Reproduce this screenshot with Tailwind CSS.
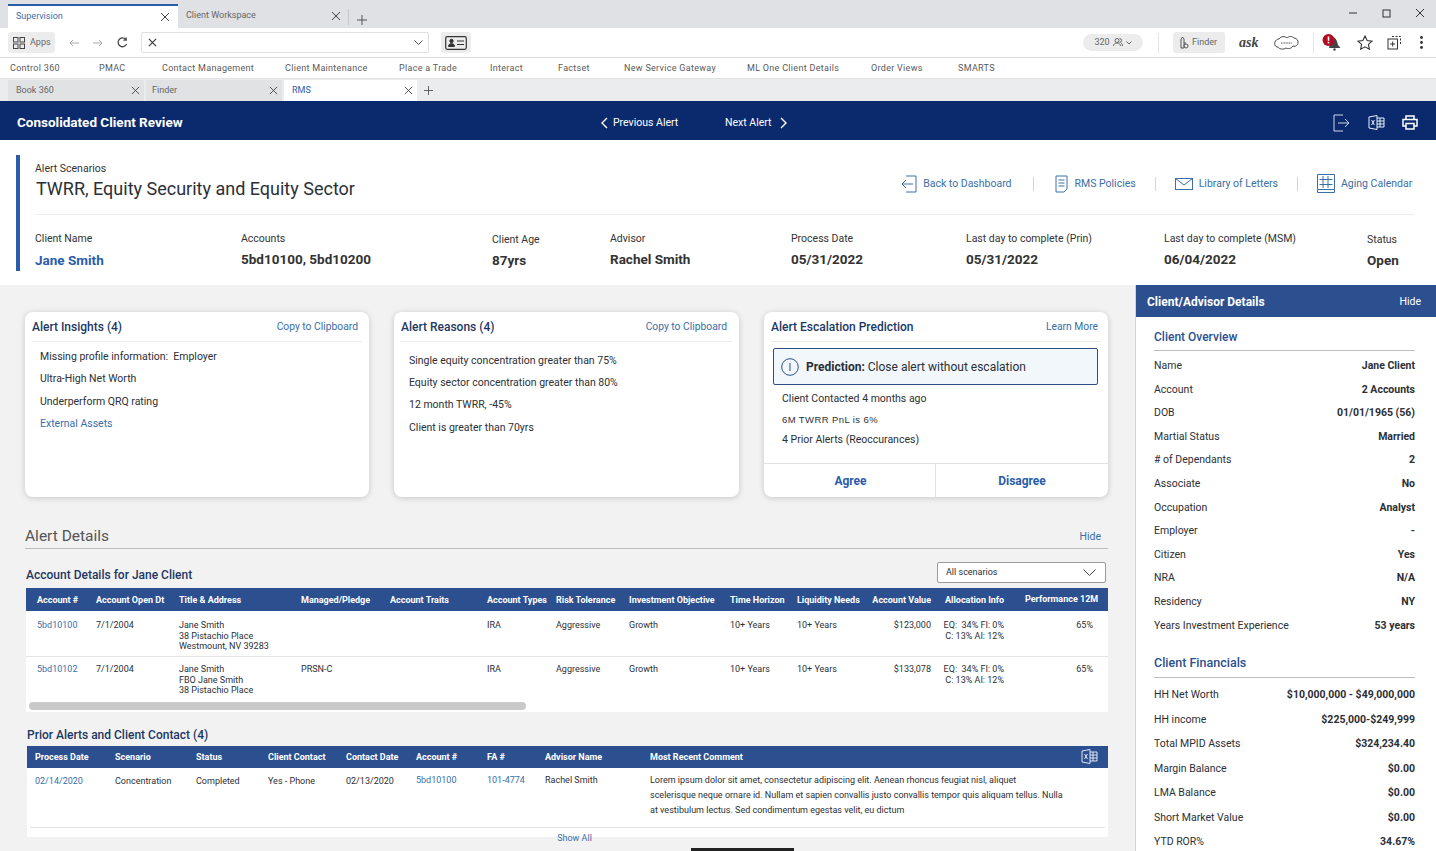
<!DOCTYPE html>
<html lang="en">
<head>
<meta charset="UTF-8">
<title>Consolidated Client Review</title>
<script src="https://cdn.jsdelivr.net/npm/@tailwindcss/browser@4"></script>
</head>
<body class="font-['Roboto',sans-serif] text-[#2b2f36] bg-[#f2f2f2]">
<div class="relative w-[1436px] h-[851px] overflow-hidden flex flex-col">

  <!-- browser tabs -->
  <div class="h-[28px] bg-[#dfe1e5] flex items-end pl-2 text-[9px] shrink-0">
    <div class="w-[170px] h-[24px] bg-white border-t-2 border-[#2a5caa] flex items-center justify-between pl-2 pr-[8px] text-[#3a6ea8]">
      <span>Supervision</span>
      <svg class="w-[10px] h-[10px]" viewBox="0 0 10 10" stroke="#444" fill="none"><path d="M1 1l8 8M9 1l-8 8"/></svg>
    </div>
    <div class="w-[170px] h-[24px] flex items-center justify-between pl-[8px] pr-[7px] text-[#666]">
      <span>Client Workspace</span>
      <svg class="w-[10px] h-[10px]" viewBox="0 0 10 10" stroke="#444" fill="none"><path d="M1 1l8 8M9 1l-8 8"/></svg>
    </div>
    <div class="w-px h-[16px] bg-[#c4c6ca] mb-[3px]"></div>
    <svg class="w-[10px] h-[10px] ml-[8px] mb-[3px]" viewBox="0 0 10 10" stroke="#555" fill="none"><path d="M5 0v10M0 5h10"/></svg>
    <div class="ml-auto flex items-center h-[28px] pr-[11px] gap-[24px] pb-[2px]">
      <svg class="w-[10px] h-[10px]" viewBox="0 0 10 10" stroke="#333" fill="none"><path d="M1 5h8"/></svg>
      <svg class="w-[9px] h-[9px]" viewBox="0 0 9 9" stroke="#333" fill="none"><rect x="1" y="1" width="7" height="7"/></svg>
      <svg class="w-[10px] h-[10px]" viewBox="0 0 10 10" stroke="#333" fill="none"><path d="M1 1l8 8M9 1l-8 8"/></svg>
    </div>
  </div>

  <!-- toolbar -->
  <div class="h-[30px] bg-white border-b border-[#dcdcdc] flex items-center pl-2 shrink-0">
    <div class="w-[47px] h-[21px] bg-[#ececec] rounded-[3px] flex items-center gap-[5px] pl-[5px] text-[9px] text-[#666] shrink-0">
      <svg class="w-[12px] h-[12px]" viewBox="0 0 12 12" stroke="#444" fill="none"><rect x=".5" y=".5" width="4.5" height="4.5"/><rect x="7" y=".5" width="4.5" height="4.5"/><rect x=".5" y="7" width="4.5" height="4.5"/><rect x="7" y="7" width="4.5" height="4.5"/></svg>
      <span>Apps</span>
    </div>
    <svg class="w-[10px] h-[8px] ml-[14px] shrink-0" viewBox="0 0 10 8" stroke="#aaa" fill="none"><path d="M10 4H1M4 1L1 4l3 3"/></svg>
    <svg class="w-[10px] h-[8px] ml-[14px] shrink-0" viewBox="0 0 10 8" stroke="#aaa" fill="none"><path d="M0 4h9M6 1l3 3-3 3"/></svg>
    <svg class="w-[11px] h-[11px] ml-[14px] shrink-0" viewBox="0 0 12 12" stroke="#444" stroke-width="1.4" fill="none"><path d="M10.5 7.5A4.8 4.8 0 1 1 9.5 2.5M10 .5v3H7"/></svg>
    <div class="w-[288px] h-[21px] ml-[13px] border border-[#e0e0e0] rounded-[2px] flex items-center justify-between pl-[6px] pr-[5px] shrink-0">
      <svg class="w-[9px] h-[9px]" viewBox="0 0 10 10" stroke="#333" stroke-width="1.2" fill="none"><path d="M1 1l8 8M9 1l-8 8"/></svg>
      <svg class="w-[9px] h-[5px]" viewBox="0 0 9 5" stroke="#555" fill="none"><path d="M.5.5l4 4 4-4"/></svg>
    </div>
    <div class="w-[30px] h-[21px] ml-[12px] bg-[#ececec] rounded-[3px] flex items-center justify-center shrink-0">
      <svg class="w-[22px] h-[14px]" viewBox="0 0 22 14" stroke="#333" fill="none"><rect x=".7" y=".7" width="20.6" height="12.6" rx="1.5" stroke-width="1.2"/><circle cx="6.5" cy="5" r="1.7" fill="#333"/><path d="M3.5 10.5c0-4 6-4 6 0z" fill="#333"/><path d="M12 5h7M12 8.500h7"/></svg>
    </div>
    <div class="ml-[612px] w-[60px] h-[17px] bg-[#ececec] rounded-full flex items-center justify-center gap-[3px] text-[9px] text-[#666] shrink-0">
      <span>320</span>
      <svg class="w-[10px] h-[9px]" viewBox="0 0 10 9" stroke="#666" fill="none"><circle cx="4" cy="2.500" r="2"/><path d="M.5 8c0-4 7-4 7 0M6.500.5a2 2 0 0 1 0 4M8 5c1 .5 1.500 1.500 1.500 3"/></svg>
      <svg class="w-[6px] h-[4px]" viewBox="0 0 6 4" stroke="#666" fill="none"><path d="M.5.5L3 3 5.500.5"/></svg>
    </div>
    <div class="w-px h-[20px] bg-[#e4e4e4] ml-[15px] shrink-0"></div>
    <div class="ml-[14px] w-[52px] h-[21px] bg-[#ececec] rounded-[3px] flex items-center gap-[3px] pl-[6px] text-[9px] text-[#666] shrink-0">
      <svg class="w-[10px] h-[13px]" viewBox="0 0 10 13" stroke="#555" fill="none"><path d="M2 12V3l1.500-2L5 3v9zM5 7h2"/><circle cx="7" cy="10" r="2"/></svg>
      <span>Finder</span>
    </div>
    <span class="ml-[14px] w-[20px] font-['Liberation_Serif',serif] italic font-bold text-[14px] text-[#444] shrink-0">ask</span>
    <svg class="ml-[15px] w-[25px] h-[16px] shrink-0" viewBox="0 0 25 16" stroke="#333" stroke-width=".9" fill="none"><path d="M5 4c2-3 6-3 8-1 2-2 5-2 7 0 3 0 4.500 3 4 5s-2 4-5 3c-2 3-5 3-7 2-3 2-7 1-8-1-3 0-4-3-3-5s2-3 4-3z"/><path d="M7 8h11" stroke-dasharray="1 .6"/></svg>
    <div class="w-px h-[20px] bg-[#e4e4e4] ml-[14px] shrink-0"></div>
    <svg class="ml-[8px] w-[19px] h-[17px] shrink-0" viewBox="0 0 19 17"><path d="M10 3c4 0 5 4 6 8l2.500 3H7z" fill="#444"/><circle cx="6.500" cy="6" r="6" fill="#b00d23"/><rect x="5.700" y="2.500" width="1.600" height="4.300" fill="#fff"/><rect x="5.700" y="7.800" width="1.600" height="1.600" fill="#fff"/><circle cx="12.500" cy="15.500" r="1.200" fill="#444"/></svg>
    <svg class="ml-[16px] w-[16px] h-[15px] shrink-0" viewBox="0 0 16 15" stroke="#333" stroke-width="1.100" fill="none"><path d="M8 1l2.100 4.500 4.900.6-3.600 3.300 1 4.800L8 11.800 3.600 14.200l1-4.800L1 6.100l4.900-.6z"/></svg>
    <svg class="ml-[14px] w-[15px] h-[15px] shrink-0" viewBox="0 0 15 15" stroke="#333" fill="none"><rect x="1" y="4" width="9.500" height="10"/><path d="M5.700 6.500v5M3.200 9h5"/><path d="M5 1.500h8.500V10" stroke-dasharray="2 1.500"/></svg>
    <svg class="ml-[18px] w-[3px] h-[13px] shrink-0" viewBox="0 0 3 13" fill="#333"><circle cx="1.500" cy="1.500" r="1.400"/><circle cx="1.500" cy="6.500" r="1.400"/><circle cx="1.500" cy="11.500" r="1.400"/></svg>
  </div>

  <!-- bookmarks -->
  <div class="h-[20px] bg-white flex items-center pl-[10px] pt-[2px] text-[9px] text-[#5a5a5a] tracking-[0.3px] shrink-0">
    <span class="w-[89px]">Control 360</span>
    <span class="w-[63px]">PMAC</span>
    <span class="w-[123px]">Contact Management</span>
    <span class="w-[114px]">Client Maintenance</span>
    <span class="w-[91px]">Place a Trade</span>
    <span class="w-[68px]">Interact</span>
    <span class="w-[66px]">Factset</span>
    <span class="w-[123px]">New Service Gateway</span>
    <span class="w-[124px]">ML One Client Details</span>
    <span class="w-[87px]">Order Views</span>
    <span>SMARTS</span>
  </div>

  <!-- sub tabs -->
  <div class="h-[23px] bg-[#eaecee] border-t border-[#e2e2e2] flex items-end pl-2 gap-[2px] text-[9px] shrink-0">
    <div class="w-[136px] h-[21px] bg-[#e0e2e4] flex items-center justify-between pl-[8px] pr-[4px] text-[#666]">
      <span>Book 360</span>
      <svg class="w-[9px] h-[9px]" viewBox="0 0 10 10" stroke="#444" fill="none"><path d="M1 1l8 8M9 1l-8 8"/></svg>
    </div>
    <div class="w-[136px] h-[21px] bg-[#e0e2e4] flex items-center justify-between pl-[6px] pr-[4px] text-[#666]">
      <span>Finder</span>
      <svg class="w-[9px] h-[9px]" viewBox="0 0 10 10" stroke="#444" fill="none"><path d="M1 1l8 8M9 1l-8 8"/></svg>
    </div>
    <div class="w-[133px] h-[21px] bg-white flex items-center justify-between pl-[8px] pr-[4px] text-[#2a5caa]">
      <span>RMS</span>
      <svg class="w-[9px] h-[9px]" viewBox="0 0 10 10" stroke="#444" fill="none"><path d="M1 1l8 8M9 1l-8 8"/></svg>
    </div>
    <svg class="w-[9px] h-[9px] ml-[5px] mb-[6px]" viewBox="0 0 10 10" stroke="#555" fill="none"><path d="M5 0v10M0 5h10"/></svg>
  </div>

  <!-- navy title bar -->
  <div class="h-[39px] bg-[#0b2a6e] text-white flex items-center pl-[17px] pt-[4px] shrink-0">
    <span class="w-[584px] text-[13.500px] font-bold">Consolidated Client Review</span>
    <svg class="w-[7px] h-[12px]" viewBox="0 0 7 12" stroke="#fff" stroke-width="1.400" fill="none"><path d="M6 1L1 6l5 5"/></svg>
    <span class="ml-[5px] w-[112px] text-[10.500px]">Previous Alert</span>
    <span class="text-[10.500px] w-[55px]">Next Alert</span>
    <svg class="w-[7px] h-[12px]" viewBox="0 0 7 12" stroke="#fff" stroke-width="1.400" fill="none"><path d="M1 1l5 5-5 5"/></svg>
    <svg class="ml-[546px] w-[17px] h-[18px]" viewBox="0 0 17 18" stroke="#c8d6ec" fill="none"><path d="M10 1H1v16h9M5 9h11M12 5l4 4-4 4"/></svg>
    <svg class="ml-[18px] w-[17px] h-[15px]" viewBox="0 0 17 15" stroke="#e8eef7" fill="none"><path d="M1 2l8-1.500v14L1 13zM9 3h7v9H9M12 3v9M9 6h7M9 9h7M3.500 5l3 5M6.500 5l-3 5"/></svg>
    <svg class="ml-[17px] w-[16px] h-[15px]" viewBox="0 0 16 15" stroke="#fff" stroke-width="1.500" fill="none"><path d="M4 4V1h8v3M4 11H1V4.500h14V11h-3M4 8.500h8V14H4z"/></svg>
  </div>

  <!-- scenario header -->
  <div class="h-[145px] bg-white pt-[15px] pl-[16px] pr-[22px] shrink-0">
    <div class="border-l-[4px] border-[#2a5caa] pl-[15px] h-[116px]">
      <div class="h-[60px] border-b border-[#ececec] flex items-start justify-between">
        <div>
          <div class="text-[10.500px] leading-[14px] mt-[7px] text-[#333]">Alert Scenarios</div>
          <div class="text-[18px] leading-[24px] mt-[1px] ml-px text-[#2b2f36]">TWRR, Equity Security and Equity Sector</div>
        </div>
        <div class="flex items-center mt-[19px] text-[10.500px] text-[#3a6ea8]">
          <svg class="w-[16px] h-[18px]" viewBox="0 0 16 18" stroke="#3a6ea8" fill="none"><path d="M5 1h10v16H5M12 9H1M5 5L1 9l4 4"/></svg>
          <span class="ml-[6px]">Back to Dashboard</span>
          <div class="w-px h-[14px] bg-[#d5d5d5] mx-[21px]"></div>
          <svg class="w-[13px] h-[18px]" viewBox="0 0 13 18" stroke="#3a6ea8" fill="none"><path d="M1 1h11v13l-3 3H1zM3.500 5h6M3.500 8h6M3.500 11h6"/></svg>
          <span class="ml-[7px]">RMS Policies</span>
          <div class="w-px h-[14px] bg-[#d5d5d5] mx-[19px]"></div>
          <svg class="w-[18px] h-[12px]" viewBox="0 0 18 12" stroke="#3a6ea8" fill="none"><rect x=".5" y=".5" width="17" height="11"/><path d="M.5.5L9 7l8.500-6.500"/></svg>
          <span class="ml-[6px]">Library of Letters</span>
          <div class="w-px h-[14px] bg-[#d5d5d5] mx-[19px]"></div>
          <svg class="w-[18px] h-[19px]" viewBox="0 0 18 19" stroke="#3a6ea8" fill="none"><path d="M.5.5h17v15H.5zM.5 15.500V18.500h17v-3M6 2v12M11 2v12M2.500 5.500h13M2.500 10.500h13"/></svg>
          <span class="ml-[6px] w-[73px]">Aging Calendar</span>
        </div>
      </div>
      <div class="grid grid-cols-[206px_251px_118px_181px_175px_198px_203px_60px] pt-[17px] text-[10.500px] text-[#333]">
        <div><div class="leading-[14px]">Client Name</div><div class="text-[13.500px] font-bold text-[#2a5caa] leading-[20px] mt-[4px]">Jane Smith</div></div>
        <div><div class="leading-[14px]">Accounts</div><div class="text-[13.500px] font-bold leading-[20px] mt-[3px]">5bd10100, 5bd10200</div></div>
        <div><div class="leading-[14px] mt-[1px]">Client Age</div><div class="text-[13.500px] font-bold leading-[20px] mt-[3px]">87yrs</div></div>
        <div><div class="leading-[14px]">Advisor</div><div class="text-[13.500px] font-bold leading-[20px] mt-[3px]">Rachel Smith</div></div>
        <div><div class="leading-[14px]">Process Date</div><div class="text-[13.500px] font-bold leading-[20px] mt-[3px]">05/31/2022</div></div>
        <div><div class="leading-[14px]">Last day to complete (Prin)</div><div class="text-[13.500px] font-bold leading-[20px] mt-[3px]">05/31/2022</div></div>
        <div><div class="leading-[14px]">Last day to complete (MSM)</div><div class="text-[13.500px] font-bold leading-[20px] mt-[3px]">06/04/2022</div></div>
        <div><div class="leading-[14px] mt-[1px]">Status</div><div class="text-[13.500px] font-bold leading-[20px] mt-[3px]">Open</div></div>
      </div>
    </div>
  </div>

  <div class="flex-1 flex min-h-0">
    <!-- main column -->
    <div class="w-[1135px] pl-[25px] pr-[27px] pt-[27px] shrink-0">
      <div class="grid grid-cols-[344px_345px_344px] gap-x-[25px]">
        <div class="h-[185px] bg-white rounded-[8px] shadow-[0_1px_6px_rgba(0,0,0,0.18)] px-[7px]">
          <div class="h-[30px] border-b border-[#ececec] flex items-center justify-between pr-[4px]">
            <span class="text-[12px] font-medium text-[#1d3763]">Alert Insights (4)</span>
            <span class="text-[10.300px] text-[#3a6ea8]">Copy to Clipboard</span>
          </div>
          <div class="pl-[8px] pt-[4px] text-[10.500px] leading-[22.400px]">
            <div>Missing profile information:&nbsp; Employer</div>
            <div>Ultra-High Net Worth</div>
            <div>Underperform QRQ rating</div>
            <div class="text-[#3a6ea8]">External Assets</div>
          </div>
        </div>
        <div class="h-[185px] bg-white rounded-[8px] shadow-[0_1px_6px_rgba(0,0,0,0.18)] px-[7px]">
          <div class="h-[30px] border-b border-[#ececec] flex items-center justify-between pr-[5px]">
            <span class="text-[12px] font-medium text-[#1d3763]">Alert Reasons (4)</span>
            <span class="text-[10.300px] text-[#3a6ea8]">Copy to Clipboard</span>
          </div>
          <div class="pl-[8px] pt-[8px] text-[10.500px] leading-[22.200px]">
            <div>Single equity concentration greater than 75%</div>
            <div>Equity sector concentration greater than 80%</div>
            <div>12 month TWRR, -45%</div>
            <div>Client is greater than 70yrs</div>
          </div>
        </div>
        <div class="h-[185px] bg-white rounded-[8px] shadow-[0_1px_6px_rgba(0,0,0,0.18)] flex flex-col">
          <div class="mx-[7px] h-[30px] border-b border-[#f0e9e4] flex items-center justify-between pr-[3px]">
            <span class="text-[12px] font-medium text-[#1d3763]">Alert Escalation Prediction</span>
            <span class="text-[10.300px] text-[#3a6ea8]">Learn More</span>
          </div>
          <div class="ml-[9px] mr-[10px] mt-[6px] h-[37px] bg-[#f2f7fc] border border-[#2d4f85] rounded-[2px] flex items-center pl-[7px] text-[12px]">
            <svg class="w-[18px] h-[18px]" viewBox="0 0 18 18" stroke="#2d4f85" fill="none"><circle cx="9" cy="9" r="8.300"/><path d="M9 5v8"/></svg>
            <span class="ml-[7px]"><b class="font-bold">Prediction:</b> Close alert without escalation</span>
          </div>
          <div class="pl-[18px] pt-[4px] text-[10.500px] leading-[20.500px]">
            <div>Client Contacted 4 months ago</div>
            <div class="font-['Liberation_Sans',sans-serif] text-[9.500px] tracking-[0.4px]">6M TWRR PnL is 6%</div>
            <div>4 Prior Alerts (Reoccurances)</div>
          </div>
          <div class="mt-auto h-[34px] border-t border-[#e2e2e2] grid grid-cols-[172px_1fr] text-[12px] font-bold text-[#2a5caa] text-center">
            <div class="flex items-center justify-center border-r border-[#e2e2e2] pl-[2px]">Agree</div>
            <div class="flex items-center justify-center">Disagree</div>
          </div>
        </div>
      </div>

      <!-- alert details -->
      <div class="mt-[28px] h-[24px] border-b border-[#bdbdbd] flex items-end justify-between pb-[2px] pr-[7px]">
        <span class="text-[15.500px] leading-[20px] text-[#555]">Alert Details</span>
        <span class="text-[10.500px] text-[#3a6ea8] mb-[1px]">Hide</span>
      </div>
      <div class="mt-[13px] h-[26px] flex items-start justify-between pr-[2px]">
        <span class="mt-[6px] ml-px text-[12px] leading-[14px] font-medium text-[#1d3763]">Account Details for Jane Client</span>
        <div class="w-[169px] h-[21px] bg-white border border-[#9a9a9a] rounded-[2px] flex items-center justify-between pl-[8px] pr-[9px] text-[9px]">
          <span>All scenarios</span>
          <svg class="w-[13px] h-[7px]" viewBox="0 0 13 7" stroke="#444" fill="none"><path d="M.5.5L6.500 6.500l6-6"/></svg>
        </div>
      </div>

      <div class="w-[1082px] ml-px bg-white text-[9px] leading-[10.700px]">
        <div class="h-[23px] bg-[#2c4f8f] text-white font-bold grid grid-cols-[59px_83px_122px_89px_97px_69px_73px_101px_67px_75px_71px_1fr] items-center pl-[11px] pt-[2px]">
          <span>Account #</span><span>Account Open Dt</span><span>Title &amp; Address</span><span>Managed/Pledge</span><span>Account Traits</span><span>Account Types</span><span>Risk Tolerance</span><span>Investment Objective</span><span>Time Horizon</span><span>Liquidity Needs</span><span class="text-right w-[59px]">Account Value</span><span class="pl-[2px] whitespace-nowrap"><span class="inline-block w-[80px]">Allocation Info</span><span class="relative top-[-1px]">Performance 12M</span></span>
        </div>
        <div class="h-[46px] border-b border-[#e4e4e4] grid grid-cols-[59px_83px_122px_89px_97px_69px_73px_101px_67px_75px_71px_1fr] pl-[11px] pt-[9px]">
          <span class="text-[#3a6ea8]">5bd10100</span><span>7/1/2004</span><span>Jane Smith<br>38 Pistachio Place<br>Westmount, NV 39283</span><span></span><span></span><span>IRA</span><span>Aggressive</span><span>Growth</span><span>10+ Years</span><span>10+ Years</span><span class="text-right w-[59px]">$123,000</span><span class="flex"><span class="text-right w-[61px]">EQ:&nbsp; 34% FI: 0%<br>C: 13% AI: 12%</span><span class="w-[89px] text-right">65%</span></span>
        </div>
        <div class="h-[44px] grid grid-cols-[59px_83px_122px_89px_97px_69px_73px_101px_67px_75px_71px_1fr] pl-[11px] pt-[7px]">
          <span class="text-[#3a6ea8]">5bd10102</span><span>7/1/2004</span><span>Jane Smith<br>FBO Jane Smith<br>38 Pistachio Place</span><span>PRSN-C</span><span></span><span>IRA</span><span>Aggressive</span><span>Growth</span><span>10+ Years</span><span>10+ Years</span><span class="text-right w-[59px]">$133,078</span><span class="flex"><span class="text-right w-[61px]">EQ:&nbsp; 34% FI: 0%<br>C: 13% AI: 12%</span><span class="w-[89px] text-right">65%</span></span>
        </div>
        <div class="h-[11px] pl-[3px] pt-px"><div class="w-[497px] h-[8px] rounded-full bg-[#c9c9c9]"></div></div>
      </div>

      <div class="mt-[16px] ml-[2px] text-[12px] leading-[14px] font-medium text-[#1d3763]">Prior Alerts and Client Contact (4)</div>
      <div class="w-[1081px] ml-[2px] mt-[4px] bg-white text-[9px] leading-[10.700px] h-[91px]">
        <div class="relative h-[22px] bg-[#2c4f8f] text-white font-bold grid grid-cols-[80px_81px_72px_78px_70px_71px_58px_105px_1fr] items-center pl-[8px]">
          <span>Process Date</span><span>Scenario</span><span>Status</span><span>Client Contact</span><span>Contact Date</span><span>Account #</span><span>FA #</span><span>Advisor Name</span><span>Most Recent Comment</span>
          <svg class="absolute right-[10px] top-[3px] w-[17px] h-[15px]" viewBox="0 0 17 15" stroke="#dfe7f3" fill="none"><path d="M1 2l8-1.500v14L1 13zM9 3h7v9H9M12 3v9M9 6h7M9 9h7M3.500 5l3 5M6.500 5l-3 5"/></svg>
        </div>
        <div class="h-[60px] mx-[3px] border-b border-[#e4e4e4] grid grid-cols-[80px_81px_72px_78px_70px_71px_58px_105px_1fr] pl-[5px] pt-[8px]">
          <span class="text-[#3a6ea8]">02/14/2020</span><span>Concentration</span><span>Completed</span><span>Yes - Phone</span><span>02/13/2020</span><span class="text-[#3a6ea8] -mt-px">5bd10100</span><span class="text-[#3a6ea8] -mt-px">101-4774</span><span class="-mt-px">Rachel Smith</span>
          <span class="leading-[15px] w-[415px] h-[45px] -mt-[3px] overflow-hidden whitespace-nowrap">Lorem ipsum dolor sit amet, consectetur adipiscing elit. Aenean rhoncus feugiat nisl, aliquet<br>scelerisque neque ornare id. Nullam et sapien convallis justo convallis tempor quis aliquam tellus. Nulla<br>at vestibulum lectus. Sed condimentum egestas velit, eu dictum</span>
        </div>
        <div class="text-center text-[#3a6ea8] pt-[5px] pl-[14px]">Show All</div>
      </div>
    </div>

    <!-- right panel -->
    <div class="flex-1 bg-white border-l border-[#c9d2e0] text-[10.500px]">
      <div class="h-[32px] bg-[#2c4f8f] text-white flex items-center justify-between pl-[11px] pr-[15px] pt-[2px]">
        <span class="text-[12px] font-bold">Client/Advisor Details</span>
        <span>Hide</span>
      </div>
      <div class="pl-[18px] pr-[21px]">
        <div class="mt-[12px] h-[22px] border-b border-[#bdbdbd] text-[12px] font-medium text-[#2c4f8f] leading-[17px]">Client Overview</div>
        <div class="pt-[3px] leading-[23.600px]">
          <div class="flex justify-between"><span>Name</span><b class="font-bold">Jane Client</b></div>
          <div class="flex justify-between"><span>Account</span><b class="font-bold">2 Accounts</b></div>
          <div class="flex justify-between"><span>DOB</span><b class="font-bold">01/01/1965 (56)</b></div>
          <div class="flex justify-between"><span>Martial Status</span><b class="font-bold">Married</b></div>
          <div class="flex justify-between"><span># of Dependants</span><b class="font-bold">2</b></div>
          <div class="flex justify-between"><span>Associate</span><b class="font-bold">No</b></div>
          <div class="flex justify-between"><span>Occupation</span><b class="font-bold">Analyst</b></div>
          <div class="flex justify-between"><span>Employer</span><b class="font-bold">-</b></div>
          <div class="flex justify-between"><span>Citizen</span><b class="font-bold">Yes</b></div>
          <div class="flex justify-between"><span>NRA</span><b class="font-bold">N/A</b></div>
          <div class="flex justify-between"><span>Residency</span><b class="font-bold">NY</b></div>
          <div class="flex justify-between"><span>Years Investment Experience</span><b class="font-bold">53 years</b></div>
        </div>
        <div class="mt-[16px] h-[25px] border-b border-[#bdbdbd] text-[12.500px] font-medium text-[#2c4f8f] leading-[20px]">Client Financials</div>
        <div class="pt-[5px] leading-[24.500px]">
          <div class="flex justify-between"><span>HH Net Worth</span><b class="font-bold">$10,000,000 - $49,000,000</b></div>
          <div class="flex justify-between"><span>HH income</span><b class="font-bold">$225,000-$249,999</b></div>
          <div class="flex justify-between"><span>Total MPID Assets</span><b class="font-bold">$324,234.40</b></div>
          <div class="flex justify-between"><span>Margin Balance</span><b class="font-bold">$0.00</b></div>
          <div class="flex justify-between"><span>LMA Balance</span><b class="font-bold">$0.00</b></div>
          <div class="flex justify-between"><span>Short Market Value</span><b class="font-bold">$0.00</b></div>
          <div class="flex justify-between"><span>YTD ROR%</span><b class="font-bold">34.67%</b></div>
        </div>
      </div>
    </div>
  </div>

  <!-- dark handle at the bottom edge -->
  <div class="absolute left-[691px] bottom-0 w-[103px] h-[3px] bg-[#222]"></div>
</div>
</body>
</html>
